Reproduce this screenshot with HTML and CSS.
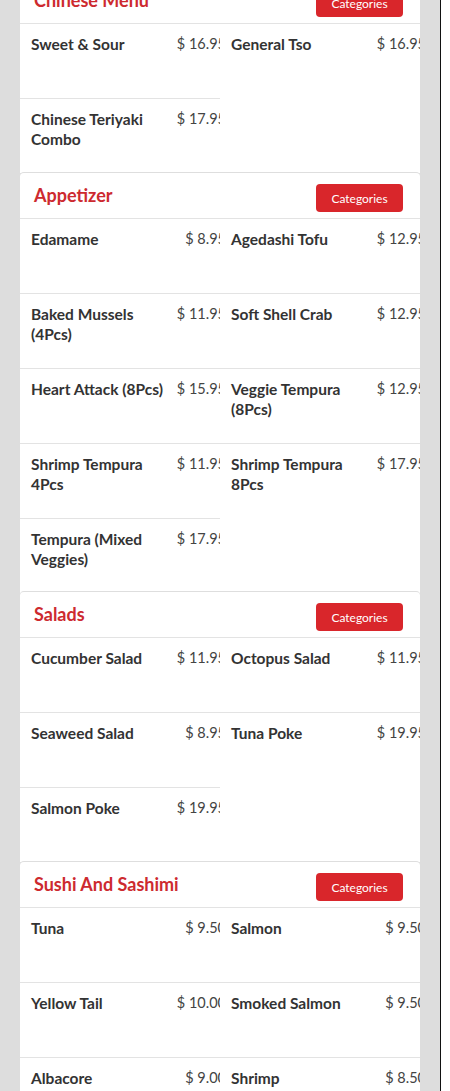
FILE: index.html
```html
<!DOCTYPE html>
<html>
<head>
<meta charset="utf-8">
<link rel="stylesheet" href="styles.css">
</head>
<body>
<div class="page">
  <div class="menu">
    <section class="card">
      <div class="card-head"><h2 class="title">Chinese Menu</h2><button class="btn">Categories</button></div>
      <div class="items">
        <div class="item"><span class="name">Sweet &amp; Sour</span><span class="price">$ 16.95</span></div>
        <div class="item"><span class="name">General Tso</span><span class="price">$ 16.95</span></div>
        <div class="item"><span class="name">Chinese Teriyaki Combo</span><span class="price">$ 17.95</span></div>
      </div>
    </section>
    <section class="card card-tight">
      <div class="card-head"><h2 class="title">Appetizer</h2><button class="btn">Categories</button></div>
      <div class="items">
        <div class="item"><span class="name">Edamame</span><span class="price">$ 8.95</span></div>
        <div class="item"><span class="name">Agedashi Tofu</span><span class="price">$ 12.95</span></div>
        <div class="item"><span class="name">Baked Mussels (4Pcs)</span><span class="price">$ 11.95</span></div>
        <div class="item"><span class="name">Soft Shell Crab</span><span class="price">$ 12.95</span></div>
        <div class="item"><span class="name">Heart Attack (8Pcs)</span><span class="price">$ 15.95</span></div>
        <div class="item"><span class="name">Veggie Tempura (8Pcs)</span><span class="price">$ 12.95</span></div>
        <div class="item"><span class="name">Shrimp Tempura 4Pcs</span><span class="price">$ 11.95</span></div>
        <div class="item"><span class="name">Shrimp Tempura 8Pcs</span><span class="price">$ 17.95</span></div>
        <div class="item"><span class="name">Tempura (Mixed Veggies)</span><span class="price">$ 17.95</span></div>
      </div>
    </section>
    <section class="card">
      <div class="card-head"><h2 class="title">Salads</h2><button class="btn">Categories</button></div>
      <div class="items">
        <div class="item"><span class="name">Cucumber Salad</span><span class="price">$ 11.95</span></div>
        <div class="item"><span class="name">Octopus Salad</span><span class="price">$ 11.95</span></div>
        <div class="item"><span class="name">Seaweed Salad</span><span class="price">$ 8.95</span></div>
        <div class="item"><span class="name">Tuna Poke</span><span class="price">$ 19.95</span></div>
        <div class="item"><span class="name">Salmon Poke</span><span class="price">$ 19.95</span></div>
      </div>
    </section>
    <section class="card">
      <div class="card-head"><h2 class="title">Sushi And Sashimi</h2><button class="btn">Categories</button></div>
      <div class="items">
        <div class="item"><span class="name">Tuna</span><span class="price">$ 9.50</span></div>
        <div class="item"><span class="name">Salmon</span><span class="price">$ 9.50</span></div>
        <div class="item"><span class="name">Yellow Tail</span><span class="price">$ 10.00</span></div>
        <div class="item"><span class="name">Smoked Salmon</span><span class="price">$ 9.50</span></div>
        <div class="item"><span class="name">Albacore</span><span class="price">$ 9.00</span></div>
        <div class="item"><span class="name">Shrimp</span><span class="price">$ 8.50</span></div>
      </div>
    </section>
  </div>
</div>
</body>
</html>
```
FILE: styles.css
```css
* { box-sizing: border-box; }
html, body { margin: 0; padding: 0; background: #ffffff; }
body {
  font-family: Lato, "Liberation Sans", sans-serif;
  height: 1091px;
  overflow: hidden;
}
.page {
  width: 441px;
  min-height: 1091px;
  background: #dddddd;
  border-right: 1px solid #111111;
  padding: 0 20px;
}
.menu {
  width: 400px;
  margin-top: -23px;
}
.card {
  background: #ffffff;
  border-top: 1px solid #dedede;
  border-radius: 4px 4px 0 0;
  overflow: hidden;
  margin-bottom: -1px;
}
.card-tight {
  margin-bottom: -2px;
}
.card-head {
  height: 45px;
  display: flex;
  align-items: center;
  justify-content: space-between;
  padding: 0 17px 0 14px;
}
.title {
  margin: 0;
  font-size: 18px;
  font-weight: 700;
  line-height: 45px;
  color: #cd2a2f;
}
.btn {
  margin-top: 5px;
  width: 87px;
  height: 28px;
  border: 0;
  border-radius: 4px;
  background: #d9262b;
  color: #ffffff;
  font-family: Lato, "Liberation Sans", sans-serif;
  font-size: 12px;
  padding: 0;
}
.items {
  display: grid;
  grid-template-columns: 200px 200px;
}
.item {
  height: 75px;
  border-top: 1px solid #e3e3e3;
  padding: 10px 0 0 11px;
  display: grid;
  grid-template-columns: 140px 55px;
  align-items: start;
  overflow: hidden;
  line-height: 20px;
}
.name {
  font-size: 15.5px;
  font-weight: 700;
  color: #333333;
}
.price {
  font-size: 14.5px;
  text-align: right;
  white-space: nowrap;
  color: #444444;
}
```
